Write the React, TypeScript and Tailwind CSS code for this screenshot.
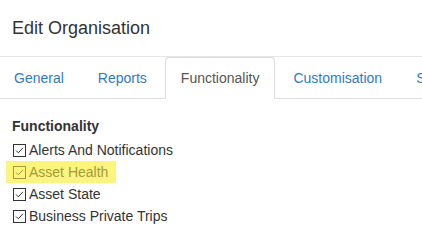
import React from "react";

const TABS = ["General", "Reports", "Functionality", "Customisation", "Settings"];
const ACTIVE = "Functionality";

const OPTIONS = [
  { name: "Alerts And Notifications", highlight: false },
  { name: "Asset Health", highlight: true },
  { name: "Asset State", highlight: false },
  { name: "Business Private Trips", highlight: false },
];

function CheckBox({ color }: { color: string }) {
  return (
    <svg width="13" height="13" viewBox="0 0 13 13" className="shrink-0">
      <rect x="0.5" y="0.5" width="12" height="12" fill="none" stroke={color} strokeWidth="1" />
      <path d="M3 6.5 L5.3 8.8 L10 3.8" fill="none" stroke={color} strokeWidth="1" />
    </svg>
  );
}

export default function App() {
  return (
    <div className="w-[422px] h-[227px] overflow-hidden bg-white text-[#333] font-['Liberation_Sans',Arial,sans-serif]">
      <div className="px-3 pt-[15px] pb-[15px] border-b border-[#e5e5e5]">
        <h4 className="text-[18px] leading-[26px]">Edit Organisation</h4>
      </div>

      {/* tabs run past the right edge, as in the dialog */}
      <ul className="flex flex-nowrap ml-[-2px] border-b border-[#ddd] whitespace-nowrap">
        {TABS.map((tab) => {
          const active = tab === ACTIVE;
          return (
            <li key={tab} className="mr-[2px] mb-[-1px] shrink-0">
              <span
                className={
                  active
                    ? "block px-[15px] py-[10px] text-[14px] leading-[20px] rounded-t-[4px] border border-[#ddd] border-b-transparent bg-white text-[#555]"
                    : "block px-[15px] py-[10px] text-[14px] leading-[20px] rounded-t-[4px] border border-transparent text-[#337ab7]"
                }
              >
                {tab}
              </span>
            </li>
          );
        })}
      </ul>

      <div className="px-3 pt-[17px]">
        <div className="text-[14px] leading-[20px] font-bold">Functionality</div>
        <div className="mt-[3px] flex flex-col">
          {OPTIONS.map((opt) =>
            opt.highlight ? (
              <div key={opt.name} className="h-[22px] flex">
                <div className="ml-[-6px] pl-[7px] pr-[8px] flex items-center gap-[3px] bg-[#fcf47d] text-[#a09c3c] text-[14px]">
                  <CheckBox color="#a09c3c" />
                  <span>{opt.name}</span>
                </div>
              </div>
            ) : (
              <div key={opt.name} className="h-[22px] flex items-center gap-[3px] pl-px text-[14px]">
                <CheckBox color="#333" />
                <span>{opt.name}</span>
              </div>
            )
          )}
        </div>
      </div>
    </div>
  );
}
